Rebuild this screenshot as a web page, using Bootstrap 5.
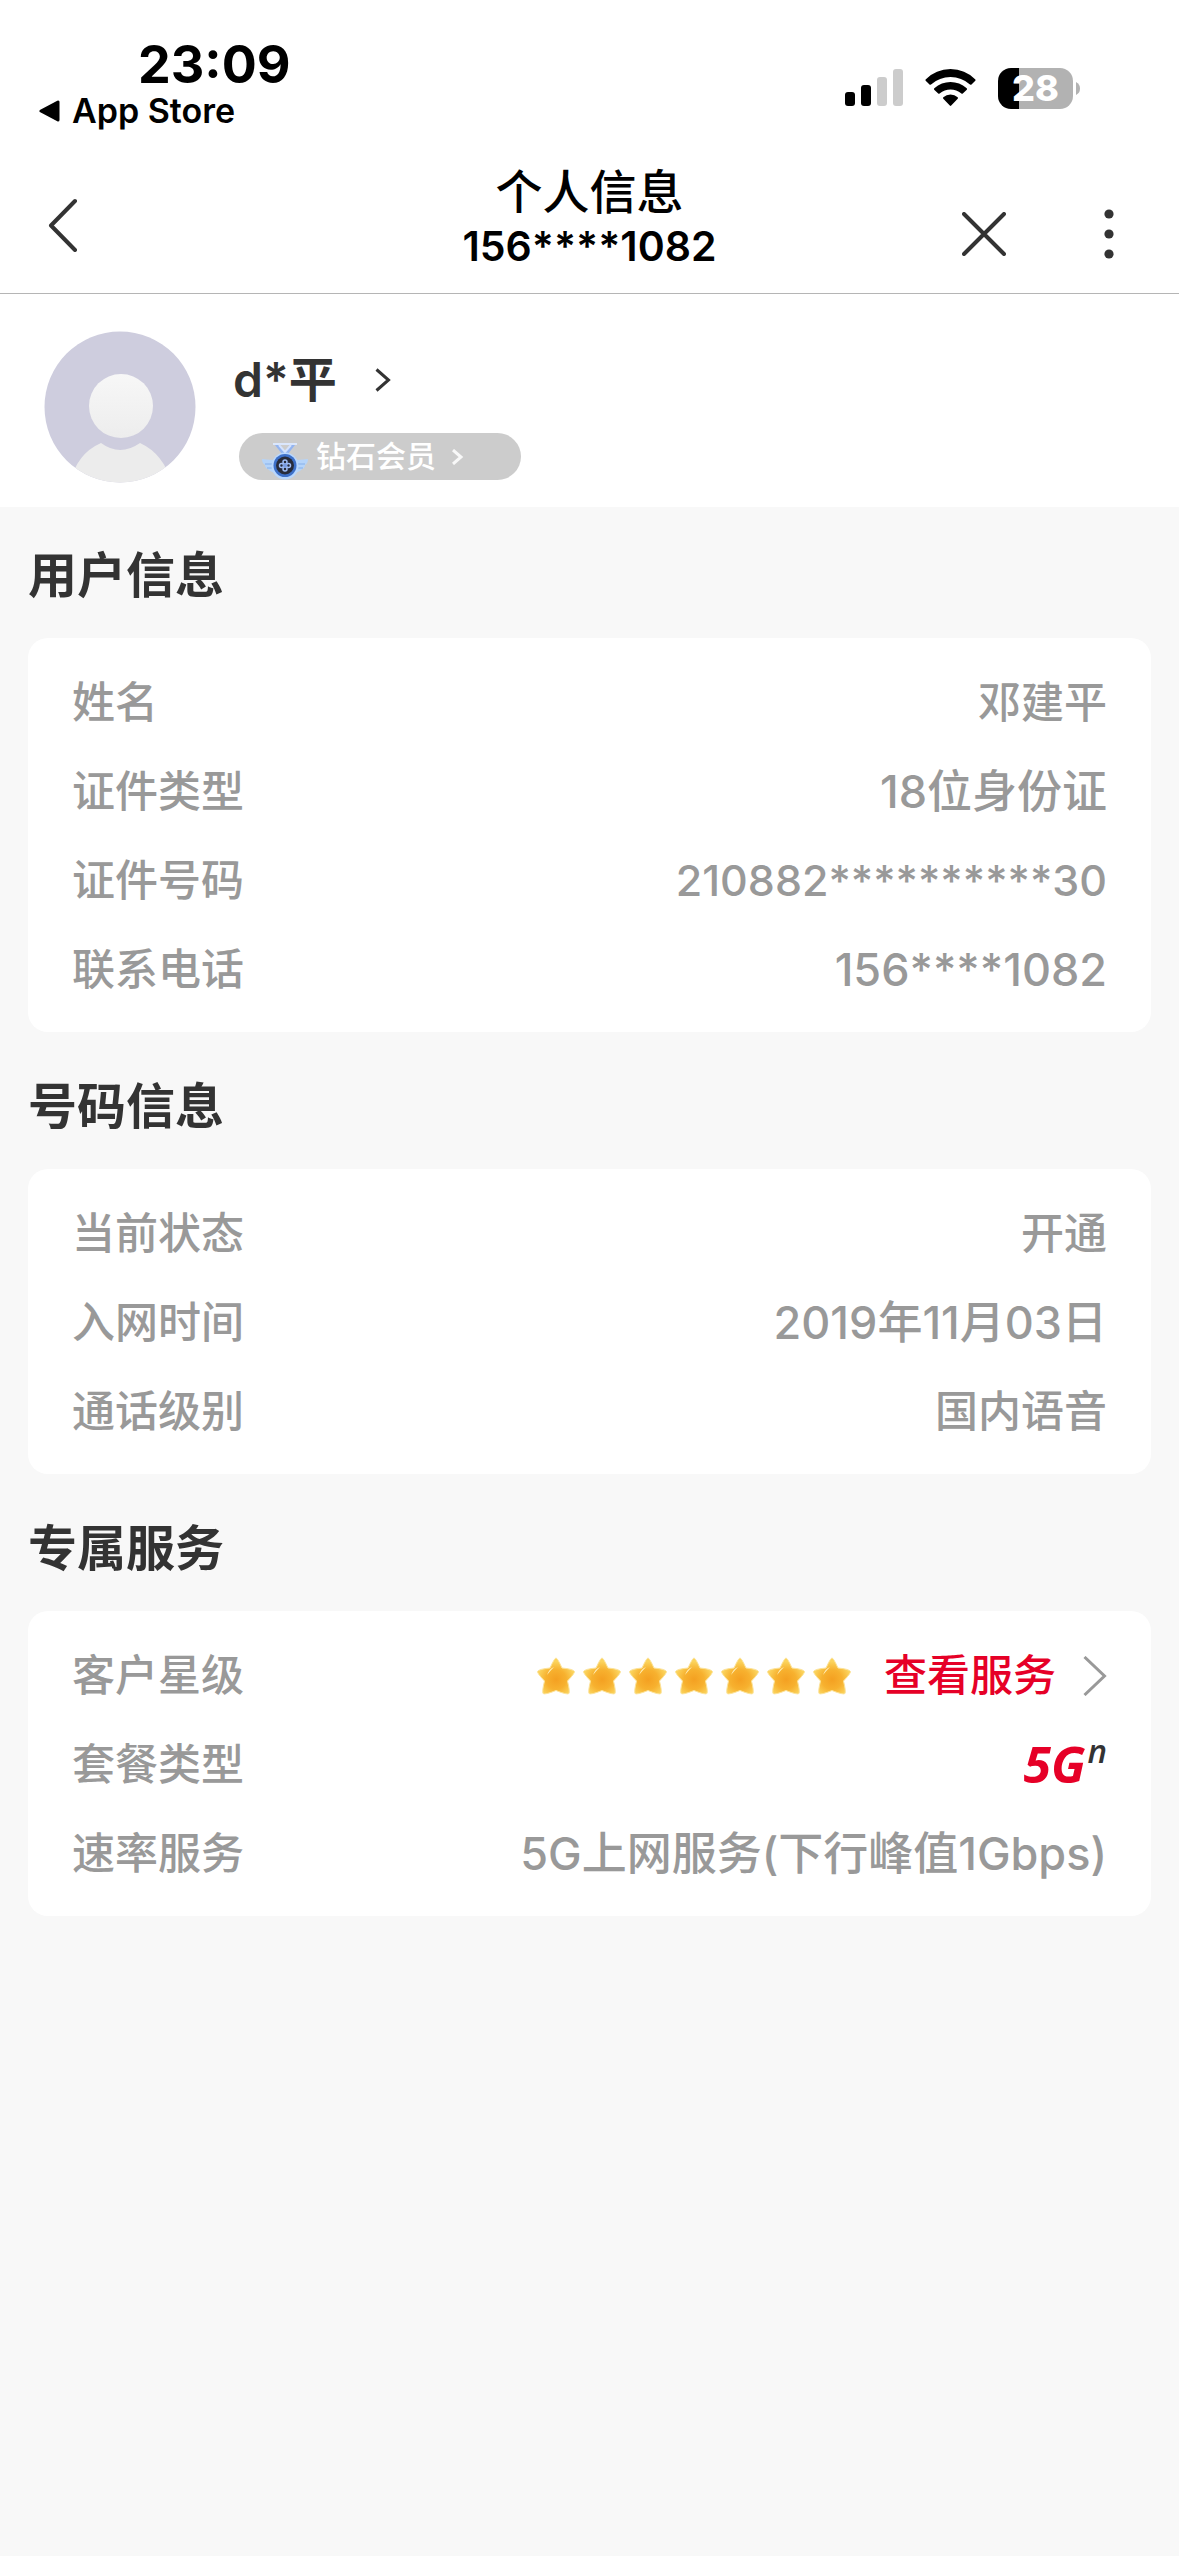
<!DOCTYPE html>
<html lang="zh-CN">
<head>
<meta charset="utf-8">
<meta name="viewport" content="width=device-width, initial-scale=1">
<title>个人信息</title>
<link href="https://cdn.jsdelivr.net/npm/bootstrap@5.3.0/dist/css/bootstrap.min.css" rel="stylesheet">
<style>
  body { background: #f8f8f8; color: #333; font-family: Inter, "Noto Sans CJK SC", sans-serif; font-weight: 500; }
  svg { display: block; flex: none; }
  a { color: inherit; text-decoration: none; }
  .plain-btn { background: none; border: 0; padding: 0; }
  .status-bar { padding: 37px 98px 0 38px; color: #000; }
  .clock { padding-left: 100px; font-size: 52px; line-height: 56px; font-weight: 700; }
  .back-app { gap: 12px; font-size: 34px; line-height: 36px; font-weight: 600; }
  .indicators { gap: 22px; padding-top: 10px; }
  .battery { gap: 3px; }
  .battery-body { width: 75px; height: 41px; border-radius: 13px; background: linear-gradient(90deg, #000 21px, #b2b2b2 21px); color: #fff; font-size: 36px; line-height: 41px; font-weight: 800; text-align: center; }
  .top-nav { padding: 35px 48px 21px; border-bottom: 1px solid #b5b5b5; color: #000; }
  .side { flex: 1 1 0; }
  .side-left { padding-top: 20px; }
  .side-right { gap: 81px; padding-top: 32px; }
  .nav-title { font-size: 47px; line-height: 56px; font-weight: 500; }
  .nav-phone { font-size: 41px; line-height: 52px; font-weight: 600; }
  .profile { gap: 37px; padding: 36px 44px 23px; }
  .nick { gap: 38px; padding-top: 22px; font-size: 48px; line-height: 56px; font-weight: 600; }
  .level { margin: 25px 0 3px 6px; padding: 0 57px 0 23px; height: 47px; border-radius: 24px; background: #ccc; color: #fff; font-size: 30px; line-height: 47px; }
  .level:hover { color: #fff; }
  .block { padding: 0 28px; margin-bottom: 6px; }
  .block-title { margin: 0; padding-top: 6px; font-size: 49px; line-height: 125px; font-weight: 700; }
  .info-list { background: #fff; border-radius: 20px; padding: 20px 44px 18px; font-size: 43px; line-height: 89px; color: #999; }
  .info-list dt, .info-list dd { margin: 0; font-weight: 500; }
  .info-list .mixed { font-size: 45px; }
  .stars { gap: 8px; }
  .service { color: #e60027; gap: 27px; margin-left: 33px; }
  .info-list .plan { font-family: "Open Sans", "Noto Sans", sans-serif; font-style: italic; font-weight: 700; font-size: 50px; color: #e60027; }
  .plan sup { font-size: 33px; font-weight: 600; top: -20px; color: #333; line-height: 0; vertical-align: baseline; margin-left: 2px; }
</style>
<script src="https://cdn.jsdelivr.net/npm/bootstrap@5.3.0/dist/js/bootstrap.bundle.min.js"></script>
</head>
<body>
<header class="bg-white">
  <div class="status-bar d-flex justify-content-between align-items-start">
    <div>
      <div class="clock">23:09</div>
      <a href="#" class="back-app d-flex align-items-center">
        <svg width="22" height="22" viewBox="0 0 22 22"><path d="M20 2v18L3 11z" fill="#000" stroke="#000" stroke-width="3" stroke-linejoin="round"/></svg>
        <span>App Store</span>
      </a>
    </div>
    <div class="indicators d-flex align-items-center align-self-center">
      <svg width="58" height="38" viewBox="0 0 58 38"><g fill="#000"><rect y="23" width="10" height="14" rx="3"/><rect x="16" y="16" width="10" height="21" rx="3"/></g><g fill="#ccc"><rect x="32" y="8" width="10" height="29" rx="3"/><rect x="48" width="10" height="37" rx="3"/></g></svg>
      <svg width="51" height="38" viewBox="0 0 51 38"><path d="M0.600 10.500Q11 0 25.500 0T50.400 10.500Q50.800 11.200 50.300 11.800L46.500 15.600Q45.800 16.100 45 15.500Q36.500 8 25.500 8T6 15.500Q5.200 16.100 4.500 15.600L.7 11.800Q.2 11.200.6 10.500ZM9.300 19.300Q16.500 13 25.500 13T41.700 19.300Q42.400 20 41.800 20.700L37.800 24.500Q37.100 25 36.400 24.500Q31.500 20.500 25.500 20.500T14.600 24.500Q13.900 25 13.200 24.500L9.200 20.700Q8.600 20 9.300 19.300ZM18.300 28.300Q21.400 25.500 25.500 25.500T32.700 28.300Q33.300 29 32.700 29.700L26.200 36.600Q25.500 37.200 24.800 36.600L18.300 29.700Q17.700 29 18.300 28.300Z"/></svg>
      <div class="battery d-flex align-items-center">
        <div class="battery-body">28</div>
        <svg width="5" height="13" viewBox="0 0 5 13"><path d="M0 0Q4 2 4 6.500T0 13Z" fill="#b2b2b2"/></svg>
      </div>
    </div>
  </div>
  <nav class="top-nav d-flex align-items-center">
    <div class="side side-left">
      <button class="plain-btn" type="button" aria-label="返回"><svg width="30" height="54" viewBox="0 0 30 54" fill="none" stroke="#333" stroke-width="4" stroke-linecap="round" stroke-linejoin="round"><path d="M27 3L3 27.500L27 52"/></svg></button>
    </div>
    <div class="text-center">
      <h1 class="nav-title m-0">个人信息</h1>
      <div class="nav-phone">156****1082</div>
    </div>
    <div class="side side-right d-flex justify-content-end align-items-center">
      <button class="plain-btn" type="button" aria-label="关闭"><svg width="44" height="44" viewBox="0 0 44 44" stroke="#333" stroke-width="4" stroke-linecap="round"><path d="M2 2L42 42M42 2L2 42"/></svg></button>
      <button class="plain-btn" type="button" aria-label="更多"><svg width="44" height="50" viewBox="0 0 44 50" fill="#333"><circle cx="22" cy="5" r="4.600"/><circle cx="22" cy="25" r="4.600"/><circle cx="22" cy="45" r="4.600"/></svg></button>
    </div>
  </nav>
</header>

<main>
  <section class="profile bg-white d-flex align-items-start">
    <svg width="152" height="154" viewBox="0 0 152 154">
      <defs>
        <clipPath id="face"><circle cx="76" cy="77" r="75.500"/></clipPath>
        <linearGradient id="head" x2="0" y2="1"><stop stop-color="#f7f7f7"/><stop offset="1" stop-color="#ededed"/></linearGradient>
      </defs>
      <g clip-path="url(#face)">
        <rect width="152" height="154" fill="#cecdde"/>
        <path d="M26 154Q32 124 57 113Q76 127 96 113Q120 124 128 154Z" fill="#ececec"/>
        <circle cx="77" cy="76" r="32" fill="url(#head)"/>
      </g>
    </svg>
    <div>
      <a href="#" class="nick d-flex align-items-center">
        <span>d*平</span>
        <svg width="16" height="24" viewBox="0 0 16 24" fill="none" stroke="#333" stroke-width="3"><path d="M1.500 1.500L13.500 12L1.500 22.500"/></svg>
      </a>
      <a href="#" class="level d-flex align-items-center">
        <svg class="align-self-end" width="46" height="38" viewBox="0 0 46 38">
          <path d="M11 1H35V3H11Z" fill="#dbe7fc"/><path d="M13 3L20 12H26L33 3H29L23 10L17 3Z" fill="#93b4f0"/><path d="M17 3L23 10L29 3" fill="none" stroke="#d3e2fd" stroke-width="2"/>
          <path d="M0 17Q8 18 13 18L13 31Q7 29 6 27Q3 26 3 23Q0 21 0 17ZM46 17Q38 18 33 18V31Q39 29 40 27Q43 26 43 23Q46 21 46 17Z" fill="#b5d4fa"/>
          <path d="M3 22H12M5 26H12M43 22H34M41 26H34" stroke="#86b0ea"/>
          <circle cx="23" cy="24" r="13.500" fill="#b9d7fd"/><circle cx="23" cy="23.500" r="11.500" fill="#3d70c9"/><circle cx="23" cy="23.500" r="9" fill="#282c3b"/>
          <g fill="none" stroke="#9dbcf6" stroke-width="1.500"><circle cx="23" cy="20" r="2"/><circle cx="23" cy="27" r="2"/><circle cx="19.500" cy="23.500" r="2"/><circle cx="26.500" cy="23.500" r="2"/></g><circle cx="23" cy="23.500" r="2" fill="#779ae0"/>
        </svg>
        <span class="ms-2 me-3">钻石会员</span>
        <svg width="12" height="16" viewBox="0 0 12 16" fill="none" stroke="#f8f8f8" stroke-width="3"><path d="M1 1L9 8L1 15"/></svg>
      </a>
    </div>
  </section>

  <section class="block">
    <h2 class="block-title">用户信息</h2>
    <dl class="info-list mb-0">
      <div class="d-flex justify-content-between"><dt>姓名</dt><dd>邓建平</dd></div>
      <div class="d-flex justify-content-between"><dt>证件类型</dt><dd class="mixed">18位身份证</dd></div>
      <div class="d-flex justify-content-between"><dt>证件号码</dt><dd>210882**********30</dd></div>
      <div class="d-flex justify-content-between"><dt>联系电话</dt><dd class="mixed">156****1082</dd></div>
    </dl>
  </section>

  <section class="block">
    <h2 class="block-title">号码信息</h2>
    <dl class="info-list mb-0">
      <div class="d-flex justify-content-between"><dt>当前状态</dt><dd>开通</dd></div>
      <div class="d-flex justify-content-between"><dt>入网时间</dt><dd class="mixed">2019年11月03日</dd></div>
      <div class="d-flex justify-content-between"><dt>通话级别</dt><dd>国内语音</dd></div>
    </dl>
  </section>

  <section class="block">
    <h2 class="block-title">专属服务</h2>
    <dl class="info-list mb-0">
      <div class="d-flex justify-content-between">
        <dt>客户星级</dt>
        <dd class="d-flex align-items-center">
          <svg width="0" height="0" class="position-absolute">
            <defs>
              <radialGradient id="gold" cy=".6"><stop stop-color="#f4a021"/><stop offset=".55" stop-color="#f7b12f"/><stop offset="1" stop-color="#fbd35c"/></radialGradient>
              <symbol id="star" viewBox="0 0 38 38"><path d="M19 1Q20.500 1 25 11Q36 12 37.500 14.500Q38 16 30.500 24Q33 34 32 36.500Q30 38 19 33.500Q8 38 6 36.500Q5 34 7.500 24Q0 16 .5 14.500Q2 12 13 11Q17.500 1 19 1Z" fill="url(#gold)" stroke="#fce39a" stroke-width="1" stroke-linejoin="round"/><path d="M10 18Q12 12 17 10Q14 13 10 18Z" fill="#fff0bd"/></symbol>
            </defs>
          </svg>
          <span class="stars d-flex" role="img" aria-label="七星">
            <svg width="38" height="38"><use href="#star"/></svg><svg width="38" height="38"><use href="#star"/></svg><svg width="38" height="38"><use href="#star"/></svg><svg width="38" height="38"><use href="#star"/></svg><svg width="38" height="38"><use href="#star"/></svg><svg width="38" height="38"><use href="#star"/></svg><svg width="38" height="38"><use href="#star"/></svg>
          </span>
          <a href="#" class="service d-flex align-items-center">
            <span>查看服务</span>
            <svg width="24" height="40" viewBox="0 0 24 40" fill="none" stroke="#999" stroke-width="3"><path d="M1.500 1L21.500 20L1.500 39"/></svg>
          </a>
        </dd>
      </div>
      <div class="d-flex justify-content-between"><dt>套餐类型</dt><dd class="plan">5G<sup>n</sup></dd></div>
      <div class="d-flex justify-content-between"><dt>速率服务</dt><dd class="mixed">5G上网服务(下行峰值1Gbps)</dd></div>
    </dl>
  </section>
</main>
</body>
</html>
